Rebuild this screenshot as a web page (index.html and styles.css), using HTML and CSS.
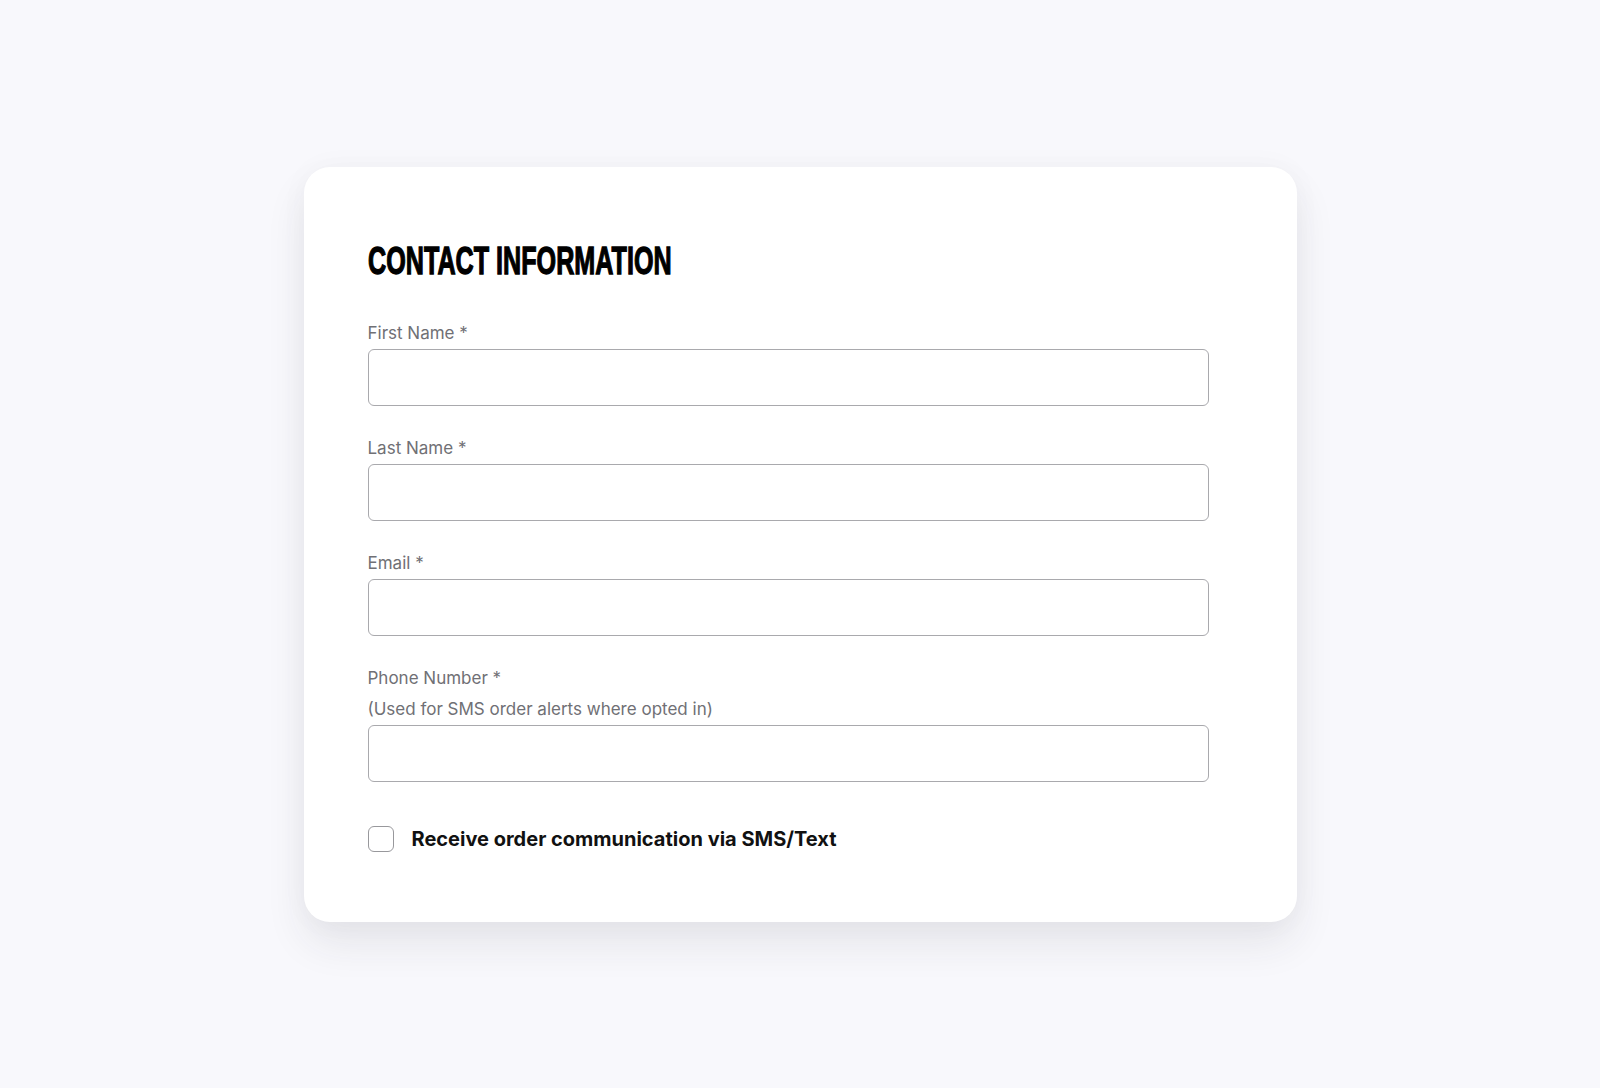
FILE: index.html
```html
<!DOCTYPE html>
<html>

<head>
    <title>Contact Information</title>
    <link rel="stylesheet" href="styles.css">
</head>

<body>
    <div class="card">
        <form class="contact-form">
            <h2 class="form-title"><span>Contact Information</span></h2>

            <div class="field">
                <label class="field-label" for="first-name">First Name *</label>
                <input class="field-input" type="text" id="first-name">
            </div>

            <div class="field">
                <label class="field-label" for="last-name">Last Name *</label>
                <input class="field-input" type="text" id="last-name">
            </div>

            <div class="field">
                <label class="field-label" for="email">Email *</label>
                <input class="field-input" type="email" id="email">
            </div>

            <div class="field">
                <label class="field-label" for="phone">Phone Number *</label>
                <div class="field-hint">(Used for SMS order alerts where opted in)</div>
                <input class="field-input" type="tel" id="phone">
            </div>

            <label class="sms-optin">
                <input type="checkbox" class="sms-checkbox">
                <span>Receive order communication via SMS/Text</span>
            </label>
        </form>
    </div>
</body>

</html>
```

FILE: styles.css
```css
body {
    margin: 0;
    min-height: 100vh;
    background-color: #f8f8fc;
    font-family: Inter, "Liberation Sans", Arial, sans-serif;
    display: flex;
    align-items: center;
    justify-content: center;
}

.card {
    width: 993px;
    box-sizing: border-box;
    padding: 71px 64px 70px;
    background-color: #fff;
    border-radius: 26px;
    box-shadow: 0 22px 40px rgba(40, 40, 60, 0.09), 0 0 30px rgba(40, 40, 60, 0.03);
}

.contact-form {
    max-width: 841px;
}

.form-title {
    margin: 0 0 37px;
    height: 46px;
    line-height: 46px;
    font-family: "Liberation Sans", Arial, sans-serif;
    font-size: 39px;
    font-weight: bold;
    text-transform: uppercase;
    color: #000;
    white-space: nowrap;
}

/* condensed display face */
.form-title span {
    display: inline-block;
    transform: scaleX(0.645);
    transform-origin: left center;
    -webkit-text-stroke: 1.3px #000;
}

.field {
    margin-bottom: 30px;
}

.field-label {
    display: block;
    font-size: 17px;
    line-height: 24px;
    color: #707075;
}

.field-hint {
    margin-top: 7px;
    font-size: 17px;
    line-height: 24px;
    color: #707075;
}

.field-input {
    display: block;
    width: 100%;
    height: 57px;
    box-sizing: border-box;
    margin-top: 4px;
    border: 1px solid #a9a9ad;
    border-radius: 6px;
    background-color: #fff;
    font-family: inherit;
    font-size: 17px;
    padding: 0 16px;
}

.sms-optin {
    display: flex;
    align-items: center;
    gap: 18px;
    margin-top: 44px;
    font-size: 20px;
    font-weight: bold;
    color: #111;
    cursor: pointer;
}

.sms-checkbox {
    appearance: none;
    -webkit-appearance: none;
    width: 26px;
    height: 26px;
    margin: 0;
    border: 1px solid #98989c;
    border-radius: 6px;
    background-color: #fff;
}
```
